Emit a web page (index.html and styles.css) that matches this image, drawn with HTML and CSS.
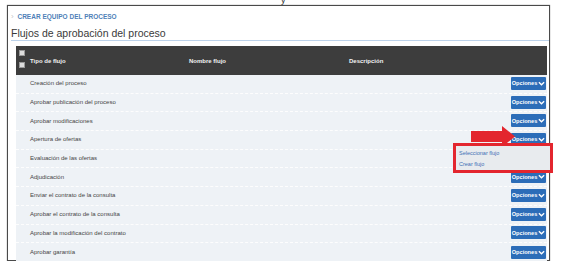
FILE: index.html
```html
<!DOCTYPE html>
<html lang="es">
<head>
    <meta charset="UTF-8">
    <title>Flujos de aprobación del proceso</title>
    <link rel="stylesheet" href="styles.css">
</head>
<body>
    <div class="top-strip">y</div>
    <div class="frame">
        <div class="breadcrumb"><span class="crumb-sep">&#8250;</span> CREAR EQUIPO DEL PROCESO</div>
        <h2 class="title">Flujos de aprobación del proceso</h2>

        <div class="table">
            <div class="thead">
                <div class="checks"><span class="chk"></span><span class="chk"></span></div>
                <div class="col col-tipo">Tipo de flujo</div>
                <div class="col col-nombre">Nombre flujo</div>
                <div class="col col-desc">Descripción</div>
            </div>

            <div class="row"><span class="cell">Creación del proceso</span><button class="opt-btn">Opciones<svg viewBox="0 0 8 5"><path d="M1 1l3 3 3-3"/></svg></button></div>
            <div class="row"><span class="cell">Aprobar publicación del proceso</span><button class="opt-btn">Opciones<svg viewBox="0 0 8 5"><path d="M1 1l3 3 3-3"/></svg></button></div>
            <div class="row"><span class="cell">Aprobar modificaciones</span><button class="opt-btn">Opciones<svg viewBox="0 0 8 5"><path d="M1 1l3 3 3-3"/></svg></button></div>
            <div class="row"><span class="cell">Apertura de ofertas</span><button class="opt-btn">Opciones<svg viewBox="0 0 8 5"><path d="M1 1l3 3 3-3"/></svg></button></div>
            <div class="row"><span class="cell">Evaluación de las ofertas</span><button class="opt-btn">Opciones<svg viewBox="0 0 8 5"><path d="M1 1l3 3 3-3"/></svg></button></div>
            <div class="row"><span class="cell">Adjudicación</span><button class="opt-btn">Opciones<svg viewBox="0 0 8 5"><path d="M1 1l3 3 3-3"/></svg></button></div>
            <div class="row"><span class="cell">Enviar el contrato de la consulta</span><button class="opt-btn">Opciones<svg viewBox="0 0 8 5"><path d="M1 1l3 3 3-3"/></svg></button></div>
            <div class="row"><span class="cell">Aprobar el contrato de la consulta</span><button class="opt-btn">Opciones<svg viewBox="0 0 8 5"><path d="M1 1l3 3 3-3"/></svg></button></div>
            <div class="row"><span class="cell">Aprobar la modificación del contrato</span><button class="opt-btn">Opciones<svg viewBox="0 0 8 5"><path d="M1 1l3 3 3-3"/></svg></button></div>
            <div class="row"><span class="cell">Aprobar garantía</span><button class="opt-btn">Opciones<svg viewBox="0 0 8 5"><path d="M1 1l3 3 3-3"/></svg></button></div>
        </div>

        <!-- highlight arrow + open dropdown -->
        <svg class="arrow" viewBox="0 0 46 24">
            <polygon points="1,6 32,6 32,1 45,11.5 32,22 32,17 1,17"/>
        </svg>
        <div class="dropdown">
            <a class="dd-item">Seleccionar flujo</a>
            <a class="dd-item">Crear flujo</a>
        </div>
    </div>
</body>
</html>
```

FILE: styles.css
```css
body {
    margin: 0;
    background-color: #fff;
    font-family: "Liberation Sans", Arial, sans-serif;
}

/* cut-off text from the line above the capture */
.top-strip {
    height: 5px;
    overflow: hidden;
    padding-left: 281px;
    font-size: 9px;
    line-height: 1px;
    color: #333;
}

.frame {
    position: relative;
    width: 541px;
    height: 254px;
    margin: 0 0 0 7px;
    border: 1px solid #4a4a4a;
    box-shadow: 0 0 1px #777;
    display: flex;
    flex-direction: column;
}

.breadcrumb {
    margin: 6px 0 0 3px;
    height: 9px;
    font-size: 6.5px;
    font-weight: bold;
    color: #4f7fb8;
    line-height: 9px;
}

.crumb-sep {
    color: #c9c9c9;
    font-weight: normal;
    font-size: 8px;
    margin-right: 2px;
}

.title {
    margin: 6px 0 0 3px;
    padding-bottom: 1px;
    font-size: 10.5px;
    font-weight: normal;
    color: #3a3a3a;
    line-height: 12px;
    border-bottom: 1px solid #bcd2ea;
}

.table {
    margin: 5px 2px 0 8px;
    display: flex;
    flex-direction: column;
}

.thead {
    height: 29px;
    background-color: #3d3d3d;
    display: flex;
    align-items: center;
    color: #f2f2f2;
    font-size: 6px;
    font-weight: bold;
}

.checks {
    width: 11px;
    align-self: flex-start;
    display: flex;
    flex-direction: column;
    gap: 6px;
    padding: 4px 0 0 3px;
}

.chk {
    width: 4px;
    height: 4px;
    background-color: #ddd;
    border: 0.5px solid #999;
}

.col-tipo { width: 159px; }
.col-nombre { width: 160px; }

.row {
    height: 18.7px;
    box-sizing: border-box;
    background-color: #eef2f6;
    border-bottom: 1px dashed #fdfdfd;
    display: flex;
    align-items: center;
    justify-content: space-between;
    padding: 0 1px 1px 14px;
}

.row:last-child {
    border-bottom: none;
}

.cell {
    font-size: 6px;
    color: #454545;
}

.opt-btn {
    width: 35px;
    height: 13px;
    padding: 0 2px;
    border: none;
    border-radius: 1px;
    background-color: #2c6db8;
    color: #fff;
    font-family: "Liberation Sans", Arial, sans-serif;
    font-size: 5.6px;
    font-weight: bold;
    display: flex;
    align-items: center;
    justify-content: center;
    gap: 1px;
}

.opt-btn svg {
    width: 7px;
    height: 5px;
    flex-shrink: 0;
    fill: none;
    stroke: #fff;
    stroke-width: 1.5;
}

/* red highlight */
.arrow {
    position: absolute;
    left: 462px;
    top: 119px;
    width: 46px;
    height: 24px;
    fill: #e3262e;
}

.dropdown {
    position: absolute;
    left: 445px;
    top: 137px;
    width: 91px;
    height: 24px;
    border: 3px solid #e3262e;
    background-color: #e8ebee;
    display: flex;
    flex-direction: column;
    justify-content: center;
    gap: 5px;
    padding-left: 3px;
}

.dd-item {
    font-size: 5.5px;
    color: #3f6fb4;
    line-height: 6px;
}
```
